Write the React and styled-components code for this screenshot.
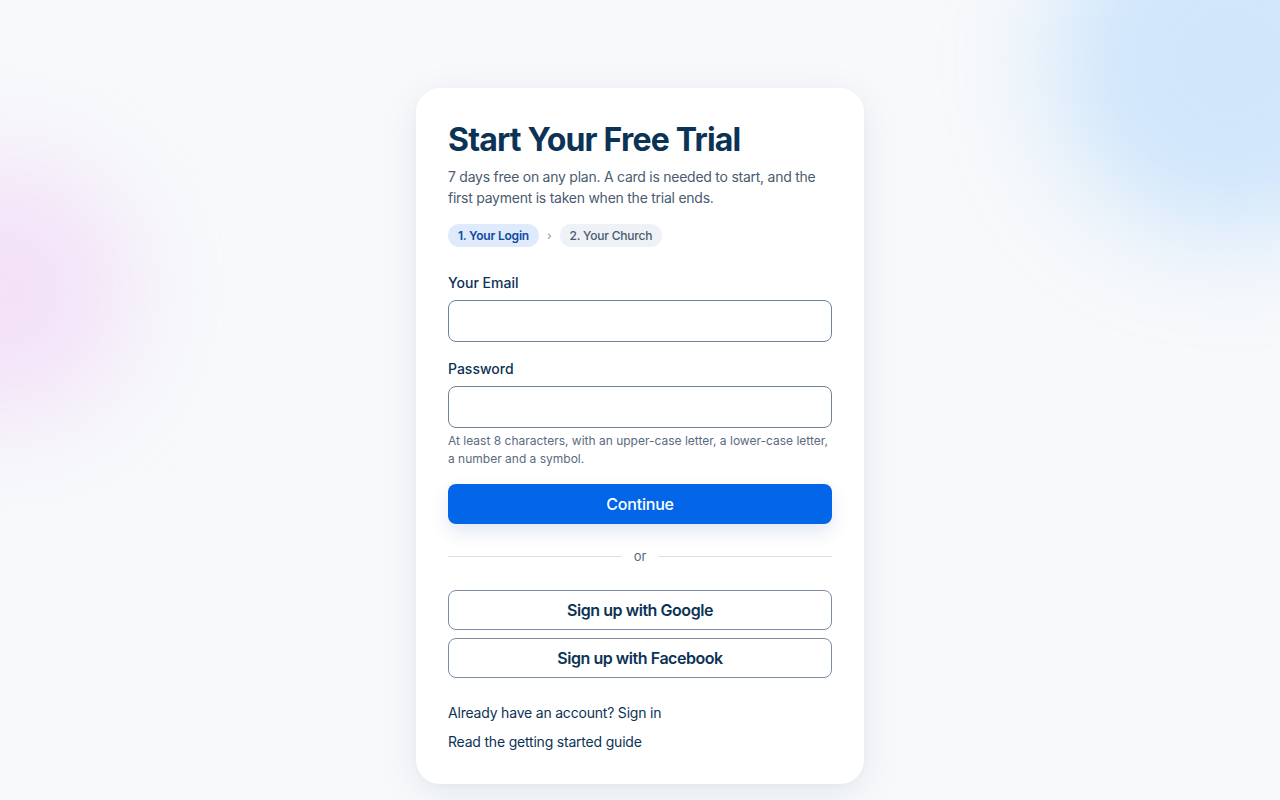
import React from "react";
import styled, { createGlobalStyle } from "styled-components";

const Global = createGlobalStyle`
  html, body { margin: 0; padding: 0; }
  body {
    background: #f7f9fb;
    font-family: Inter, "Noto Sans", sans-serif;
    color: #0c3356;
  }
  * { box-sizing: border-box; }
`;

const Page = styled.div`
  position: relative;
  min-height: 800px;
  overflow: hidden;
  display: flex;
  justify-content: center;
  align-items: flex-start;
  padding-top: 88px;
`;

const Blob = styled.div`
  position: absolute;
  border-radius: 50%;
  filter: blur(${(p) => p.$blur}px);
  background: ${(p) => p.$color};
  width: ${(p) => p.$size}px;
  height: ${(p) => p.$size}px;
  left: ${(p) => p.$x}px;
  top: ${(p) => p.$y}px;
  pointer-events: none;
`;

const Card = styled.main`
  position: relative;
  width: 448px;
  background: #ffffff;
  border-radius: 24px;
  padding: 32px;
  box-shadow: 0 10px 40px rgba(15, 40, 80, 0.08), 0 2px 6px rgba(15, 40, 80, 0.03);
  display: flex;
  flex-direction: column;
`;

const Title = styled.h1`
  margin: 0;
  font-size: 32px;
  line-height: 40px;
  font-weight: 700;
  letter-spacing: -0.8px;
  color: #0c3356;
`;

const Subtitle = styled.p`
  margin: 6px 0 0;
  font-size: 14px;
  line-height: 21px;
  color: #4b5b70;
  letter-spacing: -0.25px;
`;

const Steps = styled.div`
  display: flex;
  align-items: center;
  gap: 8px;
  margin-top: 16px;
`;

const Pill = styled.span`
  display: inline-flex;
  align-items: center;
  height: 23px;
  padding: 0 10px;
  border-radius: 12px;
  font-size: 12px;
  letter-spacing: -0.2px;
  font-weight: ${(p) => (p.$active ? 600 : 500)};
  background: ${(p) => (p.$active ? "#dfeafc" : "#eef1f5")};
  color: ${(p) => (p.$active ? "#0b4aa0" : "#4b5b70")};
`;

const Chevron = styled.span`
  font-size: 12px;
  color: #8a97a8;
  line-height: 1;
`;

const Form = styled.form`
  display: flex;
  flex-direction: column;
  margin-top: 27px;
`;

const Field = styled.div`
  display: flex;
  flex-direction: column;
  margin-bottom: ${(p) => p.$after}px;
`;

const Label = styled.label`
  font-size: 14px;
  line-height: 18px;
  font-weight: 500;
  color: #0c3356;
  margin-bottom: 8px;
`;

const Input = styled.input`
  height: 42px;
  width: 100%;
  border: 1px solid #6f8298;
  border-radius: 8px;
  padding: 0 12px;
  font: inherit;
  font-size: 15px;
  background: #fff;
  outline: none;
`;

const Hint = styled.p`
  margin: 4px 0 0;
  font-size: 12px;
  line-height: 18px;
  color: #5a6a80;
  letter-spacing: 0;
`;

const Primary = styled.button`
  height: 40px;
  width: 100%;
  border: none;
  border-radius: 8px;
  background: #0366e8;
  color: #ffffff;
  font: inherit;
  font-size: 16px;
  font-weight: 500;
  letter-spacing: -0.2px;
  box-shadow: 0 8px 18px rgba(3, 60, 140, 0.12);
  cursor: pointer;
`;

const Divider = styled.div`
  display: flex;
  align-items: center;
  gap: 12px;
  margin: 24px 0 26px;
  font-size: 13px;
  color: #5a6a80;
  &::before, &::after {
    content: "";
    flex: 1;
    height: 1px;
    background: #dbe1e8;
  }
`;

const Social = styled.button`
  height: 40px;
  width: 100%;
  border: 1px solid #7c8ca0;
  border-radius: 8px;
  background: #fff;
  color: #0c3356;
  font: inherit;
  font-size: 16px;
  font-weight: 600;
  letter-spacing: -0.45px;
  cursor: pointer;
  & + & { margin-top: 8px; }
`;

const Links = styled.div`
  display: flex;
  flex-direction: column;
  gap: 8px;
  margin-top: 24px;
`;

const TextLink = styled.a`
  font-size: 14px;
  line-height: 21px;
  color: #0c3356;
  text-decoration: none;
  letter-spacing: -0.2px;
`;

export default function App() {
  return (
    <>
      <Global />
      <Page>
        <Blob $color="rgba(170, 212, 252, 0.5)" $size={360} $x={1050} $y={-120} $blur={50} />
        <Blob $color="rgba(240, 205, 245, 0.55)" $size={260} $x={-130} $y={160} $blur={50} />
        <Card>
          <Title>Start Your Free Trial</Title>
          <Subtitle>
            7 days free on any plan. A card is needed to start, and the first payment is taken when the trial ends.
          </Subtitle>
          <Steps>
            <Pill $active>1. Your Login</Pill>
            <Chevron>›</Chevron>
            <Pill>2. Your Church</Pill>
          </Steps>
          <Form onSubmit={(e) => e.preventDefault()}>
            <Field $after={18}>
              <Label htmlFor="email">Your Email</Label>
              <Input id="email" type="email" />
            </Field>
            <Field $after={16}>
              <Label htmlFor="password">Password</Label>
              <Input id="password" type="password" />
              <Hint>
                At least 8 characters, with an upper-case letter, a lower-case letter, a number and a symbol.
              </Hint>
            </Field>
            <Primary type="submit">Continue</Primary>
          </Form>
          <Divider>or</Divider>
          <Social type="button">Sign up with Google</Social>
          <Social type="button">Sign up with Facebook</Social>
          <Links>
            <TextLink href="#">Already have an account? Sign in</TextLink>
            <TextLink href="#">Read the getting started guide</TextLink>
          </Links>
        </Card>
      </Page>
    </>
  );
}
